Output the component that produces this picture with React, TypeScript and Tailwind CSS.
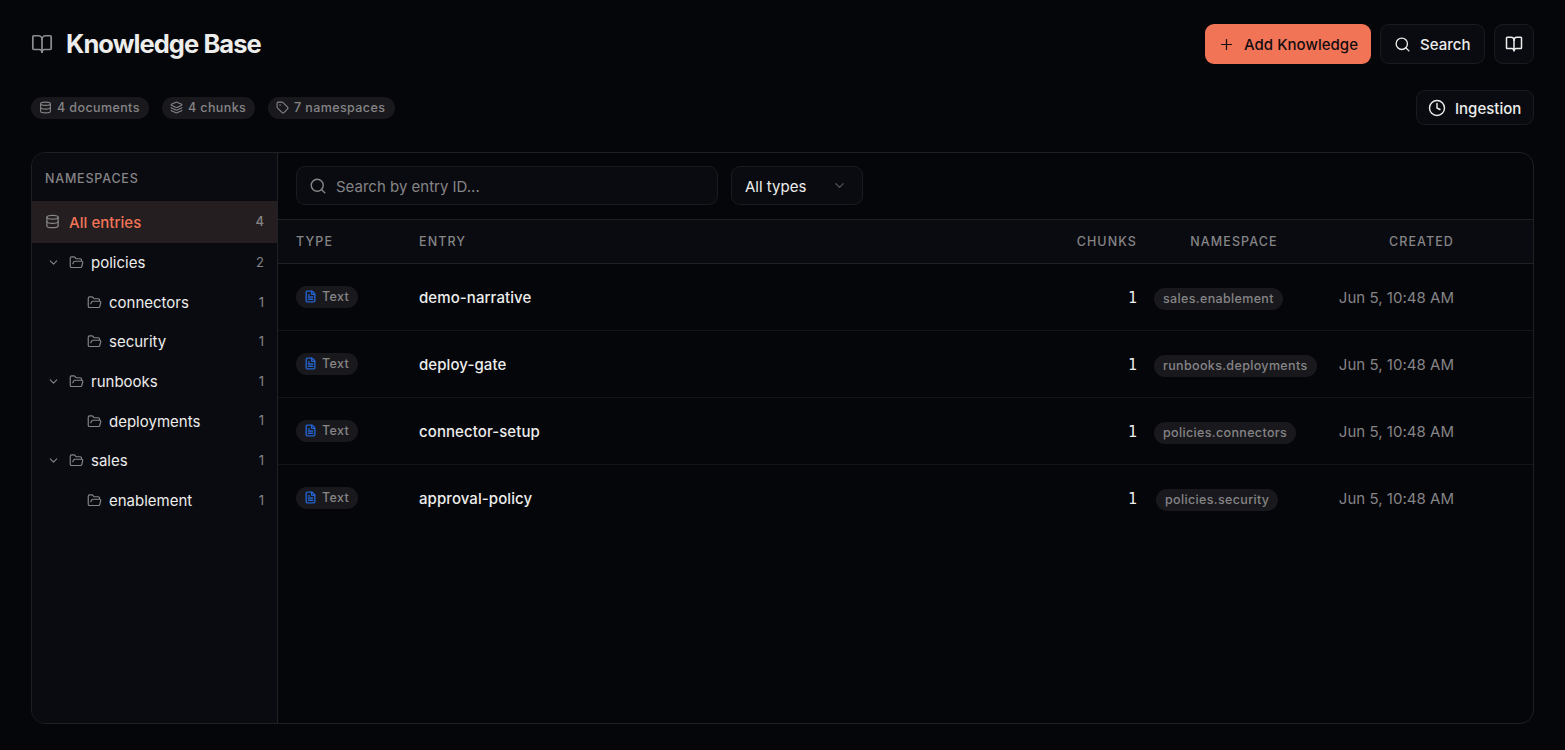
import React from "react";
import {
  BookOpen,
  ChevronDown,
  Clock,
  Database,
  FileText,
  FolderOpen,
  Layers,
  Plus,
  Search,
  Tag,
} from "lucide-react";

const namespaces = [
  { name: "policies", count: 2, child: false },
  { name: "connectors", count: 1, child: true },
  { name: "security", count: 1, child: true },
  { name: "runbooks", count: 1, child: false },
  { name: "deployments", count: 1, child: true },
  { name: "sales", count: 1, child: false },
  { name: "enablement", count: 1, child: true },
];

const entries = [
  { id: "demo-narrative", namespace: "sales.enablement" },
  { id: "deploy-gate", namespace: "runbooks.deployments" },
  { id: "connector-setup", namespace: "policies.connectors" },
  { id: "approval-policy", namespace: "policies.security" },
];

const stats = [
  { icon: Database, label: "4 documents", width: "w-[118px]" },
  { icon: Layers, label: "4 chunks", width: "w-[93px]" },
  { icon: Tag, label: "7 namespaces", width: "w-[127px]" },
];

const Header = () => (
  <header className="flex h-10 items-center justify-between">
    <div className="flex items-center gap-[13px]">
      <BookOpen size={22} strokeWidth={1.9} className="text-[#8c8b8d]" />
      <h1 className="text-[25.5px] leading-8 font-bold tracking-[-0.93px] text-[#ededec]">
        Knowledge Base
      </h1>
    </div>
    <div className="flex gap-[9px] text-[15px] font-medium">
      <button className="flex h-10 w-[166px] items-center gap-[9px] rounded-[9px] bg-[#f27457] pl-[13px] text-[#130d10]">
        <Plus size={17} strokeWidth={1.75} />
        <span className="pt-0.5 tracking-[0.03px]">Add Knowledge</span>
      </button>
      <button className="flex h-10 w-[105px] items-center gap-[9px] rounded-[9px] border border-[#1b1b1f] bg-[#0a0b10] pl-[13px]">
        <Search size={17} strokeWidth={1.9} />
        <span className="pt-0.5 tracking-[0.03px]">Search</span>
      </button>
      <button className="flex h-10 w-10 items-center justify-center rounded-[9px] border border-[#1b1b1f] bg-[#0a0b10]">
        <BookOpen size={18} strokeWidth={2} />
      </button>
    </div>
  </header>
);

const Stats = () => (
  <div className="mt-[26px] flex h-[35px] items-center justify-between">
    <div className="flex gap-[13px]">
      {stats.map(({ icon: Icon, label, width }) => (
        <span
          key={label}
          className={`flex h-[22px] items-center gap-[5px] rounded-full bg-[#19191d] pl-2 text-[12.5px] font-medium tracking-[0.4px] text-[#858486] ${width}`}
        >
          <Icon size={13} strokeWidth={2} />
          <span className="pt-0.5">{label}</span>
        </span>
      ))}
    </div>
    <button className="flex h-[35px] w-[118px] items-center gap-[9px] rounded-[9px] border border-[#1b1b1f] bg-[#0a0b10] pl-[11px] text-[15px] font-medium">
      <Clock size={18} strokeWidth={1.9} />
      <span className="pt-[3px]">Ingestion</span>
    </button>
  </div>
);

const Sidebar = () => (
  <aside className="w-[246px] shrink-0 border-r border-[#201f22] bg-[#0a0b10]">
    <div className="flex h-12 items-center pt-[5px] pl-[13px] text-[12.5px] font-medium tracking-[0.8px] text-[#858486]">
      NAMESPACES
    </div>
    <div className="flex h-[42px] items-center bg-[#251e20] px-[13px]">
      <Database
        size={15}
        strokeWidth={2}
        className="-mt-px text-[#858486]"
      />
      <span className="ml-[9px] pt-0.5 text-[15px] font-medium tracking-[0.05px] text-[#f27457]">
        All entries
      </span>
      <span className="ml-auto text-[13px] font-medium text-[#858486]">4</span>
    </div>
    {namespaces.map((ns) => (
      <div
        key={ns.name}
        className={`flex h-[39.6px] items-center pr-[13px] ${
          ns.child ? "pl-[55px]" : "pl-[15px]"
        }`}
      >
        {!ns.child && (
          <ChevronDown
            size={13}
            strokeWidth={2}
            className="mr-[9px] text-[#858486]"
          />
        )}
        <FolderOpen size={15} strokeWidth={1.9} className="text-[#858486]" />
        <span className="ml-[7px] pt-[1.5px] text-[15px]">{ns.name}</span>
        <span className="ml-auto text-[13px] text-[#858486]">{ns.count}</span>
      </div>
    ))}
  </aside>
);

const EntriesTable = () => (
  <div>
    <div className="grid h-[45px] grid-cols-[123px_1fr_100px_181px_136px] items-center border-y border-[#201f22] bg-[#0a0b10] pt-0.5 pr-[79px] pl-[18px] text-[12.5px] font-medium tracking-[1.1px] text-[#858486]">
      <div>TYPE</div>
      <div>ENTRY</div>
      <div className="text-right">CHUNKS</div>
      <div className="pr-1 pl-[17px] text-center">NAMESPACE</div>
      <div className="text-right">CREATED</div>
    </div>
    {entries.map((entry) => (
      <div
        key={entry.id}
        className="grid h-[67px] grid-cols-[123px_1fr_100px_181px_136px] items-center border-b border-[#141519] pr-[79px] pl-[18px] last:border-b-0 last:pb-px"
      >
        <div>
          <span className="flex h-[22px] w-[62px] items-center gap-[5px] rounded-full bg-[#19191d] pl-2 text-[12.5px] font-medium tracking-[0.35px] text-[#858486]">
            <FileText
              size={13}
              strokeWidth={2.5}
              className="-mt-px text-[#2563d0]"
            />
            Text
          </span>
        </div>
        <div className="pt-[3px] text-[15px] font-medium tracking-[0.08px]">
          {entry.id}
        </div>
        <div className="pt-[3px] text-right font-['DejaVu_Sans_Mono',monospace] text-[15px]">
          1
        </div>
        <div className="flex pt-[3px] pl-[17px]">
          <span
            className={`flex h-[22px] items-center rounded-full bg-[#19191d] px-[9px] pt-0.5 text-[12.5px] font-medium tracking-[0.35px] text-[#858486] ${
              entry.namespace === "policies.security" ? "ml-[2px]" : ""
            }`}
          >
            {entry.namespace}
          </span>
        </div>
        <div className="pt-[3px] text-right text-[15px] tracking-[0.03px] text-[#858486]">
          Jun 5, 10:48 AM
        </div>
      </div>
    ))}
  </div>
);

const App = () => {
  return (
    <div className="flex h-[750px] w-[1565px] flex-col bg-[#05060a] px-[31px] pt-6 font-[Inter,sans-serif] text-[#ededec]">
      <Header />
      <Stats />
      <div className="mt-[27px] flex h-[572px] w-[1503px] overflow-hidden rounded-[14px] border border-[#201f22]">
        <Sidebar />
        <main className="min-w-0 flex-1">
          <div className="flex h-[66px] gap-[13px] pt-[13px] pl-[18px] text-[15px]">
            <div className="flex h-[39px] w-[422px] items-center gap-[9px] rounded-[9px] border border-[#1b1b1f] bg-[#0a0b10] pl-3 text-[#858486]">
              <Search size={18} strokeWidth={1.9} />
              <span className="pt-[3px]">Search by entry ID...</span>
            </div>
            <div className="flex h-[39px] w-[132px] items-center justify-between rounded-[9px] border border-[#1b1b1f] bg-[#0a0b10] pr-[15px] pl-[13px]">
              <span className="pt-[3px]">All types</span>
              <ChevronDown size={15} className="text-[#555558]" />
            </div>
          </div>
          <EntriesTable />
        </main>
      </div>
    </div>
  );
};

export default App as React.ComponentType;
